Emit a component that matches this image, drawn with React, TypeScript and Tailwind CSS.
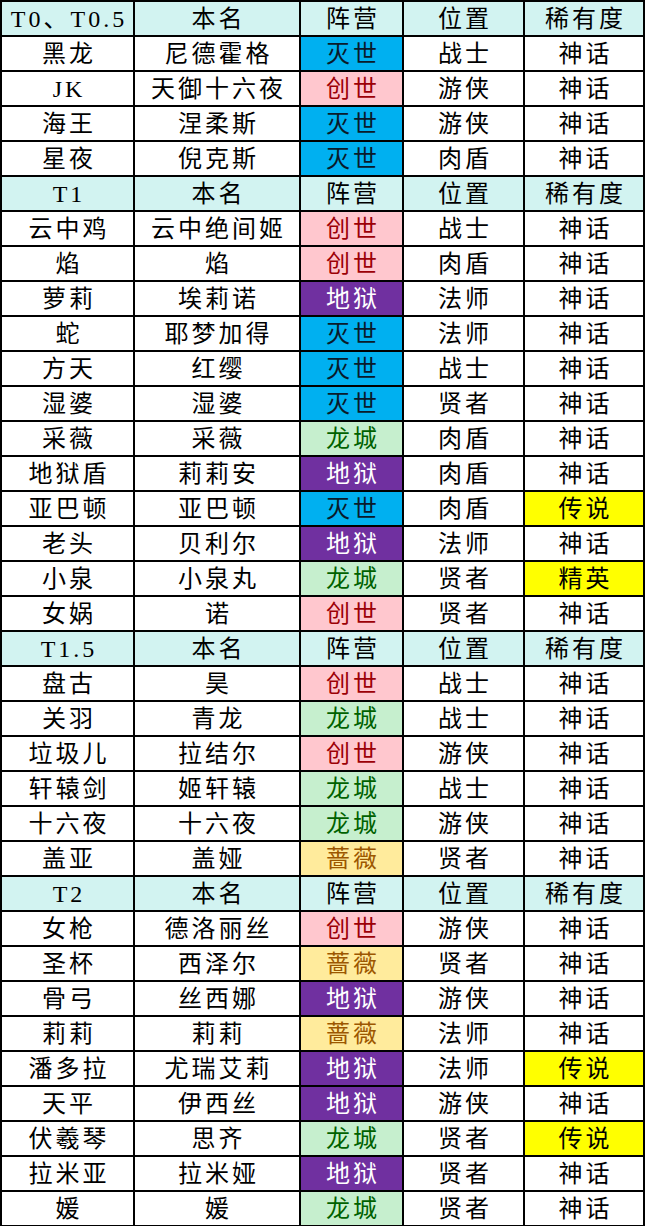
import React from "react";

type Faction = "灭世" | "创世" | "地狱" | "龙城" | "蔷薇";

const factionStyle: Record<Faction, string> = {
  灭世: "bg-[#00b0f0] text-[#0a1a2a]",
  创世: "bg-[#ffc7ce] text-[#9c0006]",
  地狱: "bg-[#7030a0] text-white",
  龙城: "bg-[#c6efce] text-[#006100]",
  蔷薇: "bg-[#ffeb9c] text-[#9c5700]",
};

type Row = { h: true; t: string } | { h?: false; a: string; b: string; f: Faction; p: string; r: string };

const rows: Row[] = [
  { h: true, t: "T0、T0.5" },
  { a: "黑龙", b: "尼德霍格", f: "灭世", p: "战士", r: "神话" },
  { a: "JK", b: "天御十六夜", f: "创世", p: "游侠", r: "神话" },
  { a: "海王", b: "涅柔斯", f: "灭世", p: "游侠", r: "神话" },
  { a: "星夜", b: "倪克斯", f: "灭世", p: "肉盾", r: "神话" },
  { h: true, t: "T1" },
  { a: "云中鸡", b: "云中绝间姬", f: "创世", p: "战士", r: "神话" },
  { a: "焰", b: "焰", f: "创世", p: "肉盾", r: "神话" },
  { a: "萝莉", b: "埃莉诺", f: "地狱", p: "法师", r: "神话" },
  { a: "蛇", b: "耶梦加得", f: "灭世", p: "法师", r: "神话" },
  { a: "方天", b: "红缨", f: "灭世", p: "战士", r: "神话" },
  { a: "湿婆", b: "湿婆", f: "灭世", p: "贤者", r: "神话" },
  { a: "采薇", b: "采薇", f: "龙城", p: "肉盾", r: "神话" },
  { a: "地狱盾", b: "莉莉安", f: "地狱", p: "肉盾", r: "神话" },
  { a: "亚巴顿", b: "亚巴顿", f: "灭世", p: "肉盾", r: "传说" },
  { a: "老头", b: "贝利尔", f: "地狱", p: "法师", r: "神话" },
  { a: "小泉", b: "小泉丸", f: "龙城", p: "贤者", r: "精英" },
  { a: "女娲", b: "诺", f: "创世", p: "贤者", r: "神话" },
  { h: true, t: "T1.5" },
  { a: "盘古", b: "昊", f: "创世", p: "战士", r: "神话" },
  { a: "关羽", b: "青龙", f: "龙城", p: "战士", r: "神话" },
  { a: "垃圾儿", b: "拉结尔", f: "创世", p: "游侠", r: "神话" },
  { a: "轩辕剑", b: "姬轩辕", f: "龙城", p: "战士", r: "神话" },
  { a: "十六夜", b: "十六夜", f: "龙城", p: "游侠", r: "神话" },
  { a: "盖亚", b: "盖娅", f: "蔷薇", p: "贤者", r: "神话" },
  { h: true, t: "T2" },
  { a: "女枪", b: "德洛丽丝", f: "创世", p: "游侠", r: "神话" },
  { a: "圣杯", b: "西泽尔", f: "蔷薇", p: "贤者", r: "神话" },
  { a: "骨弓", b: "丝西娜", f: "地狱", p: "游侠", r: "神话" },
  { a: "莉莉", b: "莉莉", f: "蔷薇", p: "法师", r: "神话" },
  { a: "潘多拉", b: "尤瑞艾莉", f: "地狱", p: "法师", r: "传说" },
  { a: "天平", b: "伊西丝", f: "地狱", p: "游侠", r: "神话" },
  { a: "伏羲琴", b: "思齐", f: "龙城", p: "贤者", r: "传说" },
  { a: "拉米亚", b: "拉米娅", f: "地狱", p: "贤者", r: "神话" },
  { a: "媛", b: "媛", f: "龙城", p: "贤者", r: "神话" },
];

function Cell({ children, cls = "bg-white text-black" }: { children: React.ReactNode; cls?: string }) {
  return (
    <div className={`flex items-center justify-center pt-[1px] tracking-[3px] indent-[3px] ${cls}`}>
      {children}
    </div>
  );
}

export default function App() {
  return (
    <div className="bg-white w-[647px] h-[1226px] overflow-hidden">
      <div
        className="inline-grid bg-black p-[2px] gap-[2px] grid-cols-[131px_164px_101px_119px_118px] auto-rows-[33px] text-[24px] leading-none font-normal"
        style={{ fontFamily: '"Liberation Serif", "Noto Sans CJK SC", serif' }}
      >
        {rows.map((row, i) => {
          if (row.h) {
            const hc = "bg-[#d2f3f1] text-black";
            return (
              <React.Fragment key={i}>
                <Cell cls={hc}>{row.t}</Cell>
                <Cell cls={hc}>本名</Cell>
                <Cell cls={hc}>阵营</Cell>
                <Cell cls={hc}>位置</Cell>
                <Cell cls={hc}>稀有度</Cell>
              </React.Fragment>
            );
          }
          const rare = row.r === "神话" ? "bg-white text-black" : "bg-[#ffff00] text-black";
          return (
            <React.Fragment key={i}>
              <Cell>{row.a}</Cell>
              <Cell>{row.b}</Cell>
              <Cell cls={factionStyle[row.f]}>{row.f}</Cell>
              <Cell>{row.p}</Cell>
              <Cell cls={rare}>{row.r}</Cell>
            </React.Fragment>
          );
        })}
      </div>
    </div>
  );
}
